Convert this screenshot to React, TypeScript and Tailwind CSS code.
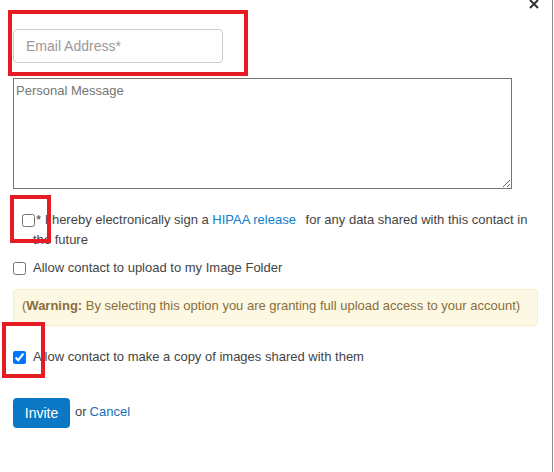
import React from "react";

export default function App() {
  return (
    <div className="relative w-[553px] h-[472px] border-r border-[#8c8c8c] bg-white font-['Liberation_Sans',Arial,sans-serif] text-[13px] leading-[20px] text-[#444]">
      <div className="w-[538px] pl-[13px] pt-[29px]">
        <input
          type="text"
          placeholder="Email Address*"
          className="block w-[210px] h-[34px] rounded-[4px] border border-[#ccc] px-[12px] text-[14px] text-[#555] outline-none placeholder:text-[#999]"
        />
        <textarea
          placeholder="Personal Message"
          className="block mt-[15px] w-[499px] h-[111px] border border-[#767676] p-[2px] text-[13px] leading-[20px] outline-none placeholder:text-[#757575]"
        />
        <div className="mt-[21px] pl-[20px] -indent-[11px]">
          <input type="checkbox" className="m-0 w-[13px] h-[13px] align-middle" />
          <span className="ml-[1px]">*</span> I hereby electronically sign a{" "}
          <a className="mr-[6px] text-[#0e80c9]">HIPAA release</a> for any data shared with this contact in the future
        </div>
        <label className="mt-[8px] flex items-center gap-[7px]">
          <input type="checkbox" className="m-0 w-[13px] h-[13px]" />
          <span>Allow contact to upload to my Image Folder</span>
        </label>
        <div className="mt-[11px] rounded-[4px] border border-[#faebcc] bg-[#fcf8e3] pl-[8px] pt-[6px] pb-[9px] text-[#8a6d3b]">
          (<b>Warning:</b> By selecting this option you are granting full upload access to your account)
        </div>
        <label className="mt-[21px] flex items-center gap-[7px]">
          <input type="checkbox" defaultChecked className="m-0 w-[13px] h-[13px]" />
          <span>Allow contact to make a copy of images shared with them</span>
        </label>
        <div className="mt-[31px] flex items-center">
          <button className="h-[30px] w-[57px] rounded-[4px] bg-[#0a78c4] text-[14px] text-white">
            Invite
          </button>
          <span className="ml-[5px] -mt-[3px]">or</span>
          <a className="ml-[3px] -mt-[3px] text-[#1a70b8]">Cancel</a>
        </div>
      </div>

      <svg
        className="absolute left-[529px] top-[-1px]"
        width="10"
        height="10"
        viewBox="0 0 10 10"
      >
        <path d="M1 1 L9 9 M9 1 L1 9" stroke="#333" strokeWidth="2" />
      </svg>

      <div className="absolute left-[8px] top-[10px] w-[240px] h-[66px] border-4 border-[#e61c24]" />
      <div className="absolute left-[10px] top-[195px] w-[41px] h-[48px] border-4 border-[#e61c24]" />
      <div className="absolute left-[2px] top-[322px] w-[43px] h-[56px] border-4 border-[#e61c24]" />
    </div>
  );
}
